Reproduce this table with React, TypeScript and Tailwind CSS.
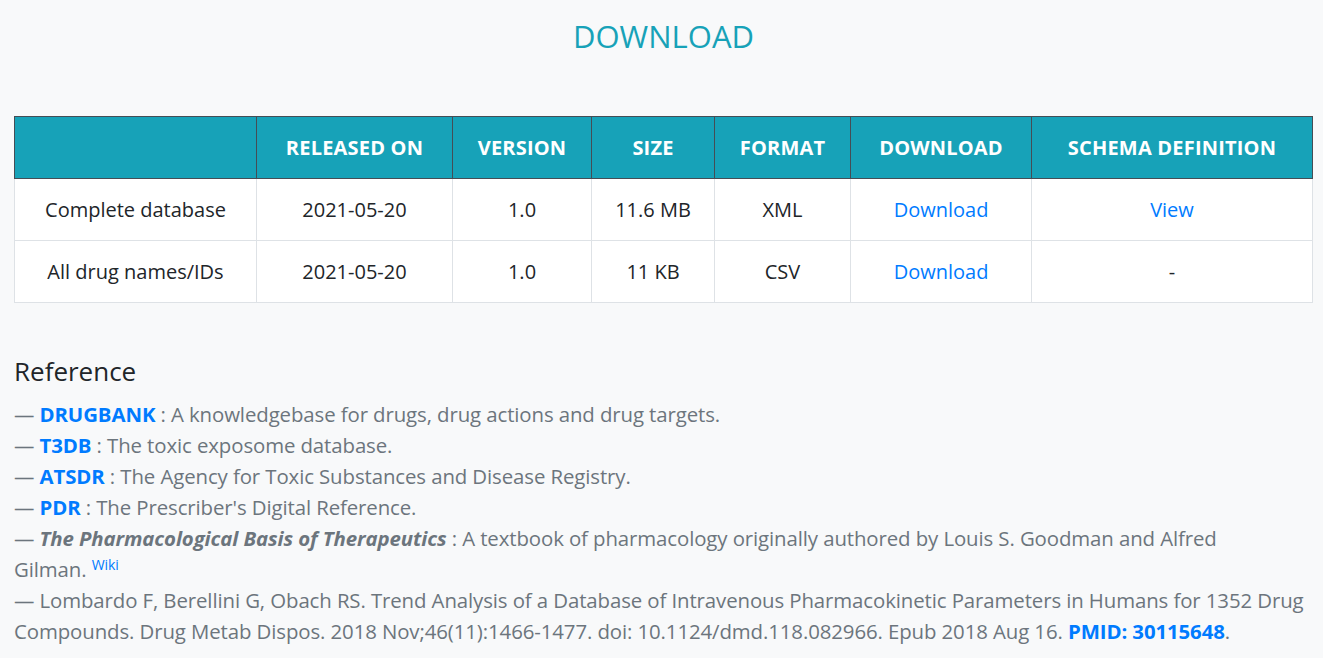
import React from 'react';

type Row = {
  name: string;
  released: string;
  version: string;
  size: string;
  format: string;
  schema?: string;
};

const rows: Row[] = [
  { name: 'Complete database', released: '2021-05-20', version: '1.0', size: '11.6 MB', format: 'XML', schema: 'View' },
  { name: 'All drug names/IDs', released: '2021-05-20', version: '1.0', size: '11 KB', format: 'CSV' },
];

const headers = ['', 'RELEASED ON', 'VERSION', 'SIZE', 'FORMAT', 'DOWNLOAD', 'SCHEMA DEFINITION'];

export default function App() {
  return (
    <div className="min-h-screen bg-[#f8f9fa] pl-[14px] pr-[10px] font-['Open_Sans',sans-serif] text-[#212529]">
      <h1 className="pt-[14px] text-center text-[31px] leading-[44px] font-medium text-[#17a2b8]">DOWNLOAD</h1>

      <table className="mt-[58px] w-full table-fixed border-collapse bg-white text-[20px]">
        <colgroup>
          <col className="w-[242px]" />
          <col className="w-[196px]" />
          <col className="w-[139px]" />
          <col className="w-[123px]" />
          <col className="w-[136px]" />
          <col className="w-[181px]" />
          <col />
        </colgroup>
        <thead>
          <tr className="h-[62px] bg-[#17a2b8] text-white">
            {headers.map((h, i) => (
              <th key={i} className="border border-[#454d55] text-center font-bold tracking-[0.2px]">
                {h}
              </th>
            ))}
          </tr>
        </thead>
        <tbody>
          {rows.map(r => (
            <tr key={r.name} className="h-[62px] text-center">
              <td className="border border-[#dee2e6]">{r.name}</td>
              <td className="border border-[#dee2e6]">{r.released}</td>
              <td className="border border-[#dee2e6]">{r.version}</td>
              <td className="border border-[#dee2e6]">{r.size}</td>
              <td className="border border-[#dee2e6]">{r.format}</td>
              <td className="border border-[#dee2e6]">
                <a href="#" className="text-[#007bff]">Download</a>
              </td>
              <td className="border border-[#dee2e6]">
                {r.schema ? <a href="#" className="text-[#007bff]">{r.schema}</a> : '-'}
              </td>
            </tr>
          ))}
        </tbody>
      </table>

      <h2 className="mt-[50px] text-[26px] leading-[36px] font-medium">Reference</h2>
      <div className="mt-[10px] pb-[12px] text-[20.4px] leading-[31px] tracking-[-0.1px] text-[#6c757d]">
        <div>
          — <a href="#" className="font-bold text-[#007bff]">DRUGBANK</a> : A knowledgebase for drugs, drug actions and drug targets.
        </div>
        <div>
          — <a href="#" className="font-bold text-[#007bff]">T3DB</a> : The toxic exposome database.
        </div>
        <div>
          — <a href="#" className="font-bold text-[#007bff]">ATSDR</a> : The Agency for Toxic Substances and Disease Registry.
        </div>
        <div>
          — <a href="#" className="font-bold text-[#007bff]">PDR</a> : The Prescriber's Digital Reference.
        </div>
        <div>
          — <b className="italic">The Pharmacological Basis of Therapeutics</b> : A textbook of pharmacology originally authored by Louis S. Goodman and Alfred{' '}
          <span className="whitespace-nowrap">
            Gilman.{' '}
            <sup className="text-[14px] text-[#007bff]">Wiki</sup>
          </span>
        </div>
        <div>
          — Lombardo F, Berellini G, Obach RS. Trend Analysis of a Database of Intravenous Pharmacokinetic Parameters in Humans for 1352 Drug Compounds. Drug Metab Dispos. 2018 Nov;46(11):1466-1477. doi: 10.1124/dmd.118.082966. Epub 2018 Aug 16.{' '}
          <a href="#" className="font-bold text-[#007bff]">PMID: 30115648</a>.
        </div>
      </div>
    </div>
  );
}
